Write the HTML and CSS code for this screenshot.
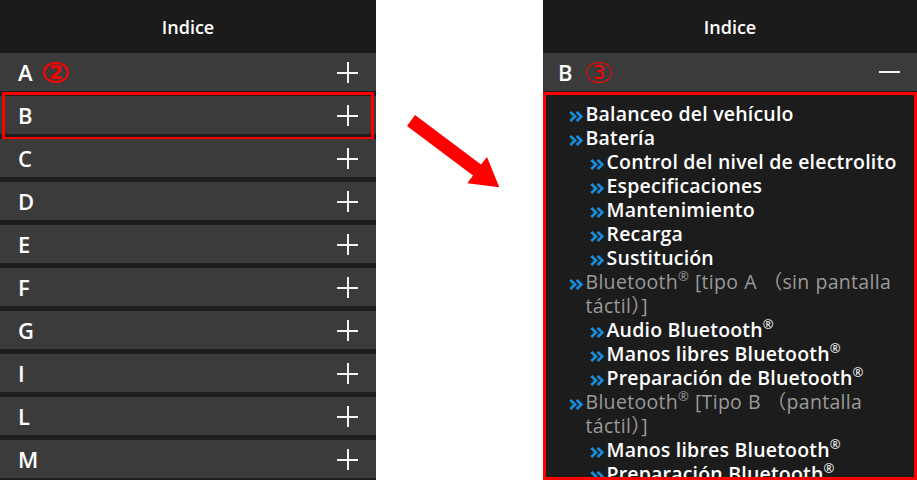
FILE: index.html
```html
<!DOCTYPE html>
<html lang="es">
<head>
<meta charset="utf-8">
<title>Indice</title>
<link rel="stylesheet" href="styles.css">
</head>
<body>
<div class="panel left">
  <div class="header">Indice</div>
  <div class="row"><span class="letter">A</span><span class="badge thick">2</span><span class="plus"></span></div>
  <div class="row selected"><span class="letter">B</span><span class="plus"></span></div>
  <div class="row"><span class="letter">C</span><span class="plus"></span></div>
  <div class="row"><span class="letter">D</span><span class="plus"></span></div>
  <div class="row"><span class="letter">E</span><span class="plus"></span></div>
  <div class="row"><span class="letter">F</span><span class="plus"></span></div>
  <div class="row"><span class="letter">G</span><span class="plus"></span></div>
  <div class="row"><span class="letter">I</span><span class="plus"></span></div>
  <div class="row"><span class="letter">L</span><span class="plus"></span></div>
  <div class="row"><span class="letter">M</span><span class="plus"></span></div>
</div>
<div class="gap">
  <svg class="arrow" width="167" height="480" viewBox="376 0 167 480">
    <polygon fill="#ff0000" points="415,115 481,164.6 487,157 499.3,187.3 467.3,183.3 473,175.4 407,126"/>
  </svg>
</div>
<div class="panel right">
  <div class="header">Indice</div>
  <div class="row open"><span class="letter">B</span><span class="badge thin">3</span><span class="minus"></span></div>
  <div class="list">
    <div class="item"><svg class="chev" viewBox="0 0 14 11"><path d="M1.3 0.9 L6 5.5 L1.3 10.1 M7.6 0.9 L12.3 5.5 L7.6 10.1"/></svg><span>Balanceo del vehículo</span></div>
    <div class="item"><svg class="chev" viewBox="0 0 14 11"><path d="M1.3 0.9 L6 5.5 L1.3 10.1 M7.6 0.9 L12.3 5.5 L7.6 10.1"/></svg><span>Batería</span></div>
    <div class="item sub"><svg class="chev" viewBox="0 0 14 11"><path d="M1.3 0.9 L6 5.5 L1.3 10.1 M7.6 0.9 L12.3 5.5 L7.6 10.1"/></svg><span>Control del nivel de electrolito</span></div>
    <div class="item sub"><svg class="chev" viewBox="0 0 14 11"><path d="M1.3 0.9 L6 5.5 L1.3 10.1 M7.6 0.9 L12.3 5.5 L7.6 10.1"/></svg><span>Especificaciones</span></div>
    <div class="item sub"><svg class="chev" viewBox="0 0 14 11"><path d="M1.3 0.9 L6 5.5 L1.3 10.1 M7.6 0.9 L12.3 5.5 L7.6 10.1"/></svg><span>Mantenimiento</span></div>
    <div class="item sub"><svg class="chev" viewBox="0 0 14 11"><path d="M1.3 0.9 L6 5.5 L1.3 10.1 M7.6 0.9 L12.3 5.5 L7.6 10.1"/></svg><span>Recarga</span></div>
    <div class="item sub"><svg class="chev" viewBox="0 0 14 11"><path d="M1.3 0.9 L6 5.5 L1.3 10.1 M7.6 0.9 L12.3 5.5 L7.6 10.1"/></svg><span>Sustitución</span></div>
    <div class="item group"><svg class="chev" viewBox="0 0 14 11"><path d="M1.3 0.9 L6 5.5 L1.3 10.1 M7.6 0.9 L12.3 5.5 L7.6 10.1"/></svg><span>Bluetooth<sup>®</sup> [tipo A （sin pantalla táctil）]</span></div>
    <div class="item sub"><svg class="chev" viewBox="0 0 14 11"><path d="M1.3 0.9 L6 5.5 L1.3 10.1 M7.6 0.9 L12.3 5.5 L7.6 10.1"/></svg><span>Audio Bluetooth<sup>®</sup></span></div>
    <div class="item sub"><svg class="chev" viewBox="0 0 14 11"><path d="M1.3 0.9 L6 5.5 L1.3 10.1 M7.6 0.9 L12.3 5.5 L7.6 10.1"/></svg><span>Manos libres Bluetooth<sup>®</sup></span></div>
    <div class="item sub"><svg class="chev" viewBox="0 0 14 11"><path d="M1.3 0.9 L6 5.5 L1.3 10.1 M7.6 0.9 L12.3 5.5 L7.6 10.1"/></svg><span>Preparación de Bluetooth<sup>®</sup></span></div>
    <div class="item group"><svg class="chev" viewBox="0 0 14 11"><path d="M1.3 0.9 L6 5.5 L1.3 10.1 M7.6 0.9 L12.3 5.5 L7.6 10.1"/></svg><span>Bluetooth<sup>®</sup> [Tipo B （pantalla táctil）]</span></div>
    <div class="item sub"><svg class="chev" viewBox="0 0 14 11"><path d="M1.3 0.9 L6 5.5 L1.3 10.1 M7.6 0.9 L12.3 5.5 L7.6 10.1"/></svg><span>Manos libres Bluetooth<sup>®</sup></span></div>
    <div class="item sub"><svg class="chev" viewBox="0 0 14 11"><path d="M1.3 0.9 L6 5.5 L1.3 10.1 M7.6 0.9 L12.3 5.5 L7.6 10.1"/></svg><span>Preparación Bluetooth<sup>®</sup></span></div>
  </div>
</div>
</body>
</html>
```

FILE: styles.css
```css
html, body {
  margin: 0;
  padding: 0;
  background: #ffffff;
}
body {
  display: flex;
  width: 917px;
  height: 480px;
  overflow: hidden;
  font-family: "Open Sans", "Noto Sans", "Noto Sans CJK JP", sans-serif;
  color: #ffffff;
}
.panel {
  display: flex;
  flex-direction: column;
  background: #1d1d1d;
  height: 480px;
  overflow: hidden;
}
.left { width: 376px; flex: none; }
.gap { width: 167px; flex: none; }
.arrow { display: block; }
.right { width: 374px; flex: none; }

.header {
  height: 53px;
  flex: none;
  background: #1b1b1b;
  display: flex;
  align-items: center;
  justify-content: center;
  font-size: 18px;
  font-weight: 600;
  padding-top: 1px;
  box-sizing: border-box;
}
.row {
  position: relative;
  flex: none;
  height: 38px;
  background: #3b3b3b;
  display: flex;
  align-items: center;
  padding: 0 18px;
  box-sizing: border-box;
}
.row + .row { margin-top: 5px; }
.letter {
  font-size: 22px;
  font-weight: 600;
  width: 18px;
}
.right .row { padding-left: 15px; padding-right: 17px; }

.badge {
  display: inline-flex;
  align-items: center;
  justify-content: center;
  box-sizing: border-box;
  width: 26px;
  height: 21px;
  border-radius: 50%;
  color: #ff0000;
  font-family: "DejaVu Sans", sans-serif;
  line-height: 1;
  margin-left: 7px;
}
.badge.thick {
  border: 2.5px solid #ff0000;
  font-size: 19px;
  font-weight: 700;
}
.badge.thin {
  border: 1.5px solid #ff0000;
  font-size: 19px;
  font-weight: 400;
  margin-left: 10px;
}

.plus, .minus {
  margin-left: auto;
  width: 21px;
  height: 21px;
  position: relative;
}
.plus::before, .plus::after, .minus::before {
  content: "";
  position: absolute;
  background: #f4f4f4;
}
.plus::before { left: 0; right: 0; top: 10px; height: 2px; }
.plus::after { top: 0; bottom: 0; left: 10px; width: 2px; }
.minus::before { left: 0; right: 0; top: 9px; height: 2px; }

.selected::after {
  content: "";
  position: absolute;
  top: -4px;
  bottom: -6px;
  left: 2px;
  right: 2px;
  border: 3px solid #ff0000;
}

.list {
  flex: 1;
  margin-top: 1px;
  border: 3px solid #ff0000;
  background: #1c1c1c;
  padding: 7px 10px 0 23px;
  overflow: hidden;
}
.item {
  display: flex;
  font-size: 19.5px;
  letter-spacing: 0.2px;
  font-weight: 600;
  line-height: 24px;
  color: #ffffff;
}
.item.sub { padding-left: 21px; }
.item.group {
  color: #9a9a9a;
  font-weight: 400;
  letter-spacing: 0.3px;
  word-spacing: 0.5px;
}
.chev {
  flex: none;
  width: 14px;
  height: 11px;
  margin: 9px 2.5px 0 0;
  fill: none;
  stroke: #1a8ad6;
  stroke-width: 2.8;
}
sup {
  font-size: 13px;
  line-height: 0;
  vertical-align: 8px;
  font-weight: 400;
}
```
